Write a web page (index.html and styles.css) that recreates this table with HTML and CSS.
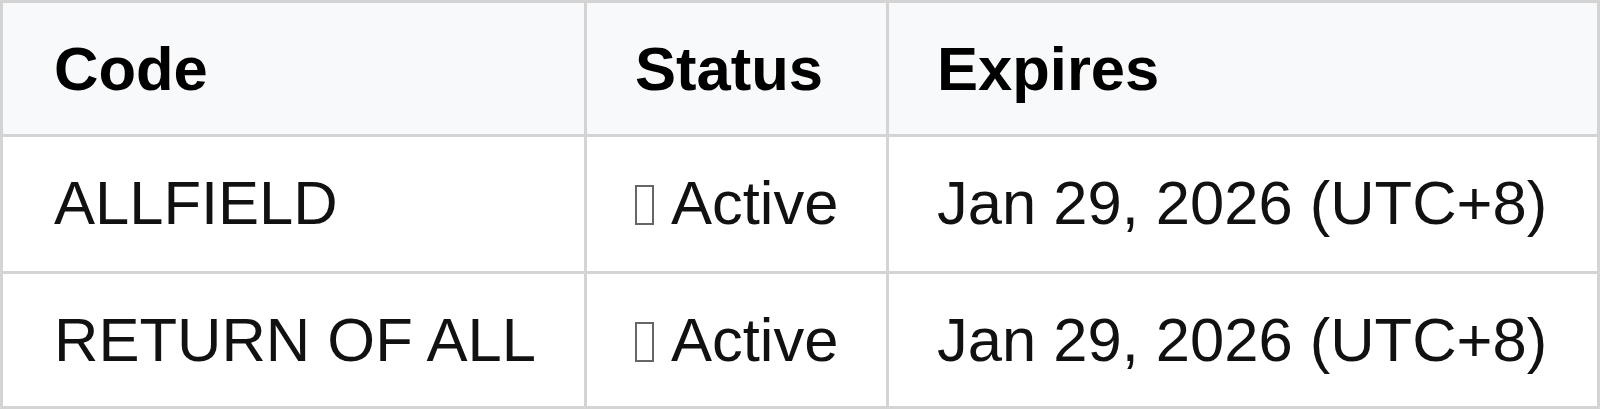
FILE: index.html
```html
<!DOCTYPE html>
<html lang="en">
<head>
<meta charset="utf-8">
<title>Codes</title>
<link rel="stylesheet" href="styles.css">
</head>
<body>
<table class="codes">
  <colgroup>
    <col class="col-code">
    <col class="col-status">
    <col class="col-expires">
  </colgroup>
  <thead>
    <tr class="row-head">
      <th>Code</th>
      <th>Status</th>
      <th>Expires</th>
    </tr>
  </thead>
  <tbody>
    <tr class="row-one">
      <td>ALLFIELD</td>
      <td><span class="tofu"></span>Active</td>
      <td>Jan 29, 2026 (UTC+8)</td>
    </tr>
    <tr class="row-two">
      <td>RETURN OF ALL</td>
      <td><span class="tofu"></span>Active</td>
      <td>Jan 29, 2026 (UTC+8)</td>
    </tr>
  </tbody>
</table>
</body>
</html>
```

FILE: styles.css
```css
html, body {
  margin: 0;
  padding: 0;
  background: #ffffff;
}

.codes {
  width: 1600px;
  border-collapse: collapse;
  table-layout: fixed;
  font-family: "Liberation Sans", Arial, sans-serif;
  font-size: 61.5px;
  line-height: normal;
  color: #111111;
}

.col-code { width: 584px; }
.col-status { width: 302px; }
.col-expires { width: auto; }

.codes th,
.codes td {
  border: 3px solid #d4d4d4;
  padding: 30px 47px 0 48px;
  text-align: left;
  vertical-align: top;
  white-space: nowrap;
}

.codes th:first-child,
.codes td:first-child {
  padding-left: 51px;
}

.row-head th { height: 101px; }
.row-one td { height: 104px; }
.row-two td { height: 102px; }

.codes th {
  background: #f8f9fa;
  font-weight: bold;
  color: #000000;
}

.tofu {
  display: inline-block;
  width: 15px;
  height: 36px;
  border: 2px solid #666666;
  margin-right: 17px;
  vertical-align: -1px;
}
```
